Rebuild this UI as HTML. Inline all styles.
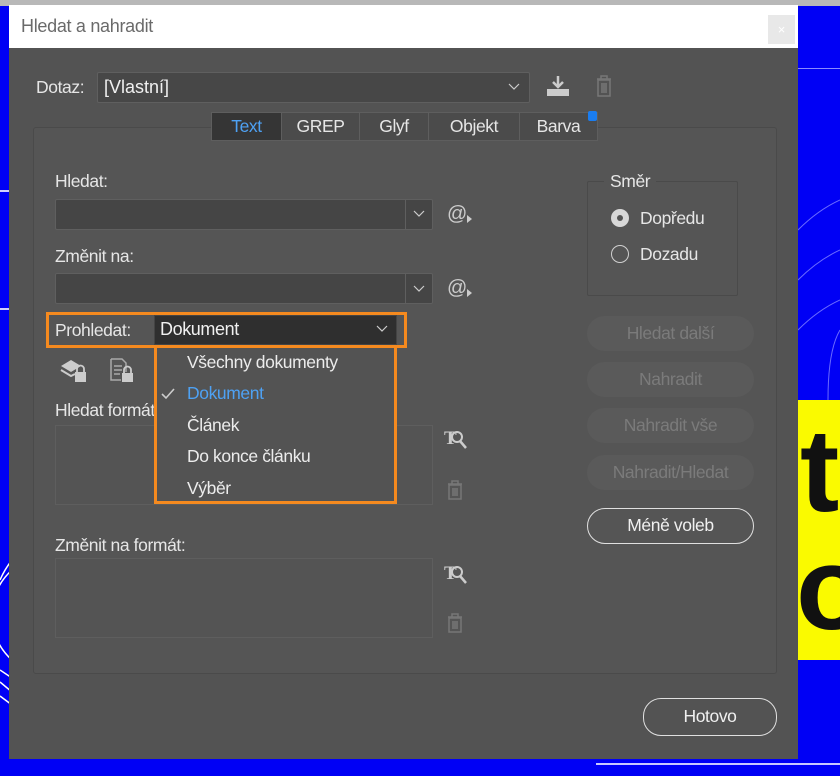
<!DOCTYPE html>
<html><head><meta charset="utf-8"><style>
*{margin:0;padding:0;box-sizing:border-box}
body{width:840px;height:776px;overflow:hidden;background:#0000f5;font-family:"Liberation Sans",sans-serif;position:relative;color:#e8e8e8}
.a{position:absolute}
.lbl{font-size:17.5px;color:#e6e6e6;letter-spacing:-0.4px}
.field{background:#454545;border:1px solid #5f5f5f;border-radius:2px}
.btn{position:absolute;left:587px;width:167px;height:35px;border-radius:18px;background:#5a5a5a;color:#7b7b7b;font-size:17.5px;text-align:center;line-height:35px;letter-spacing:-0.4px}
.obtn{position:absolute;border:1.5px solid #e0e0e0;border-radius:18px;color:#f0f0f0;font-size:17.5px;text-align:center;letter-spacing:-0.4px}
.tab{position:absolute;top:112px;height:29px;background:#4b4b4b;border:1px solid #5e5e5e;font-size:17.5px;line-height:27px;text-align:center;color:#e6e6e6;letter-spacing:-0.4px}
.mi{position:absolute;left:187px;font-size:17.5px;color:#ececec;letter-spacing:-0.4px}
</style></head><body>
<div class="a" style="left:0;top:0;width:840px;height:6px;background:#b8b8b8"></div>
<div class="a" style="left:798px;top:68px;width:42px;height:1px;background:#8a8aff"></div>
<div class="a" style="left:0;top:190px;width:10px;height:2px;background:#d0d0ff"></div>
<div class="a" style="left:0;top:308px;width:10px;height:2px;background:#d0d0ff"></div>
<svg class="a" style="left:0;top:560px" width="12" height="160"><g fill="none" stroke="#fff" stroke-width="1.5"><path d="M12 10 A60 60 0 0 0 12 100"/><path d="M12 0 A90 90 0 0 0 0 20"/><path d="M0 110 L12 118"/><path d="M0 122 L12 132"/><path d="M0 136 L12 145"/></g></svg>
<div class="a" style="left:798px;top:400px;width:42px;height:260px;background:#fafa00"></div>
<div class="a" style="left:800px;top:412px;font:bold 118px/1 'Liberation Sans',sans-serif;color:#111;letter-spacing:-4px">t</div>
<div class="a" style="left:796px;top:530px;font:bold 118px/1 'Liberation Sans',sans-serif;color:#111">o</div>
<svg class="a" style="left:798px;top:130px" width="42" height="300"><g fill="none" stroke="#6a6aff" stroke-width="1"><path d="M0 100 Q20 80 42 70"/><path d="M0 150 Q20 130 42 120"/><path d="M0 200 Q20 180 42 170"/><path d="M30 270 Q30 220 42 200"/></g></svg>
<div class="a" style="left:596px;top:763px;width:244px;height:2px;background:#c8c8ff"></div>

<div class="a" style="left:9px;top:5px;width:789px;height:754px;background:#535353"></div>
<div class="a" style="left:9px;top:5px;width:789px;height:43px;background:#fff"></div>
<div class="a" style="left:21px;top:16px;font-size:18px;color:#6a6a6a;letter-spacing:-0.3px">Hledat a nahradit</div>
<div class="a" style="left:768px;top:15px;width:27px;height:29px;background:#e8e8e8;color:#fff;font-size:13px;text-align:center;line-height:29px">×</div>

<div class="a lbl" style="left:36px;top:77px">Dotaz:</div>
<div class="a field" style="left:97px;top:72px;width:433px;height:31px;background:#474747"></div>
<div class="a" style="left:104px;top:77px;font-size:18px;color:#f0f0f0">[Vlastní]</div>
<svg class="a" style="left:508px;top:83px" width="12" height="8"><path d="M1 1 L6 6 L11 1" fill="none" stroke="#ccc" stroke-width="1.2"/></svg>
<svg class="a" style="left:544px;top:74px" width="28" height="24"><path d="M14 2 V12 M9 8 L14 13 L19 8" stroke="#ccc" stroke-width="2.5" fill="none"/><rect x="3" y="15" width="22" height="7" fill="#ccc"/></svg>
<svg class="a" style="left:594px;top:74px" width="20" height="24"><g fill="none" stroke="#777" stroke-width="1.5"><path d="M3 5 H17 M7 5 V2 H13 V5"/><rect x="4" y="6" width="12" height="16"/><path d="M8 9 V19 M10 9 V19 M12 9 V19"/></g></svg>

<div class="a" style="left:33px;top:127px;width:744px;height:547px;border:1px solid #4a4a4a;border-radius:3px;background:#555"></div>
<div class="tab" style="left:211px;width:71px;background:#353535;color:#4ea1f3">Text</div>
<div class="tab" style="left:281px;width:79px">GREP</div>
<div class="tab" style="left:359px;width:70px">Glyf</div>
<div class="tab" style="left:428px;width:92px">Objekt</div>
<div class="tab" style="left:519px;width:79px">Barva</div>
<div class="a" style="left:588px;top:111px;width:9px;height:10px;background:#1a7df0;border-radius:2px"></div>

<div class="a lbl" style="left:55px;top:171px">Hledat:</div>
<div class="a field" style="left:55px;top:199px;width:378px;height:31px"></div>
<div class="a" style="left:405px;top:200px;width:1px;height:29px;background:#5f5f5f"></div>
<svg class="a" style="left:413px;top:210px" width="12" height="8"><path d="M1 1 L6 6 L11 1" fill="none" stroke="#ccc" stroke-width="1.2"/></svg>
<div class="a" style="left:447px;top:203px;font-size:20px;color:#ccc">@</div>
<svg class="a" style="left:467px;top:215px" width="6" height="8"><path d="M0 0 L5 4 L0 8Z" fill="#ccc"/></svg>

<div class="a lbl" style="left:55px;top:246px">Změnit na:</div>
<div class="a field" style="left:55px;top:273px;width:378px;height:31px"></div>
<div class="a" style="left:405px;top:274px;width:1px;height:29px;background:#5f5f5f"></div>
<svg class="a" style="left:413px;top:285px" width="12" height="8"><path d="M1 1 L6 6 L11 1" fill="none" stroke="#ccc" stroke-width="1.2"/></svg>
<div class="a" style="left:447px;top:277px;font-size:20px;color:#ccc">@</div>
<svg class="a" style="left:467px;top:289px" width="6" height="8"><path d="M0 0 L5 4 L0 8Z" fill="#ccc"/></svg>

<div class="a" style="left:46px;top:312px;width:361px;height:36px;border:3px solid #f58a1f"></div>
<div class="a lbl" style="left:55px;top:320px">Prohledat:</div>
<div class="a" style="left:154px;top:315px;width:243px;height:30px;background:#2f2f2f;border:1px solid #444"></div>
<div class="a" style="left:160px;top:319px;font-size:18px;color:#f0f0f0;letter-spacing:-0.4px">Dokument</div>
<svg class="a" style="left:376px;top:325px" width="12" height="8"><path d="M1 1 L6 6 L11 1" fill="none" stroke="#ccc" stroke-width="1.2"/></svg>

<svg class="a" style="left:59px;top:356px" width="30" height="28"><path d="M2 10 L12 4 L22 10 L12 16Z" fill="#ccc"/><path d="M2 14 L12 20 L16 18" stroke="#ccc" stroke-width="2" fill="none"/><rect x="16" y="16" width="11" height="10" fill="#ccc"/><path d="M18 16 V13 A3.5 3.5 0 0 1 25 13 V16" stroke="#ccc" stroke-width="1.8" fill="none"/></svg>
<svg class="a" style="left:108px;top:356px" width="28" height="28"><path d="M3 3 H14 L18 7 V16" stroke="#aaa" stroke-width="1.5" fill="none"/><path d="M3 3 V24 H13" stroke="#aaa" stroke-width="1.5" fill="none"/><path d="M6 10 H14 M6 14 H14 M6 18 H12" stroke="#aaa" stroke-width="1.5"/><rect x="14" y="17" width="11" height="9" fill="#ccc"/><path d="M16 17 V14 A3.5 3.5 0 0 1 23 14 V17" stroke="#ccc" stroke-width="1.8" fill="none"/></svg>

<div class="a lbl" style="left:55px;top:400px">Hledat formát:</div>
<div class="a" style="left:55px;top:425px;width:378px;height:80px;border:1px solid #5e5e5e;background:#545454"></div>
<div class="a" style="left:444px;top:428px;font:bold 19px 'Liberation Serif',serif;color:#ccc">T</div>
<svg class="a" style="left:450px;top:430px" width="18" height="20"><circle cx="7" cy="7" r="5" stroke="#ccc" stroke-width="2" fill="none"/><path d="M10 11 L16 18" stroke="#ccc" stroke-width="2.5"/></svg>
<svg class="a" style="left:446px;top:480px" width="18" height="20"><g fill="none" stroke="#777" stroke-width="1.5"><path d="M2 4 H16 M6 4 V1 H12 V4"/><rect x="3" y="5" width="12" height="14"/><path d="M7 8 V16 M9 8 V16 M11 8 V16"/></g></svg>

<div class="a lbl" style="left:55px;top:535px">Změnit na formát:</div>
<div class="a" style="left:55px;top:558px;width:378px;height:80px;border:1px solid #5e5e5e;background:#545454"></div>
<div class="a" style="left:444px;top:563px;font:bold 19px 'Liberation Serif',serif;color:#ccc">T</div>
<svg class="a" style="left:450px;top:565px" width="18" height="20"><circle cx="7" cy="7" r="5" stroke="#ccc" stroke-width="2" fill="none"/><path d="M10 11 L16 18" stroke="#ccc" stroke-width="2.5"/></svg>
<svg class="a" style="left:446px;top:613px" width="18" height="20"><g fill="none" stroke="#777" stroke-width="1.5"><path d="M2 4 H16 M6 4 V1 H12 V4"/><rect x="3" y="5" width="12" height="14"/><path d="M7 8 V16 M9 8 V16 M11 8 V16"/></g></svg>

<div class="a" style="left:154px;top:345px;width:243px;height:159px;background:#535353;border:3px solid #f58a1f"></div>
<div class="mi" style="top:352px">Všechny dokumenty</div>
<svg class="a" style="left:160px;top:387px" width="16" height="14"><path d="M2 7 L6 11 L14 2" fill="none" stroke="#ccc" stroke-width="1.6"/></svg>
<div class="mi" style="top:383px;color:#4ea1f3">Dokument</div>
<div class="mi" style="top:415px">Článek</div>
<div class="mi" style="top:446px">Do konce článku</div>
<div class="mi" style="top:478px">Výběr</div>

<div class="a" style="left:587px;top:181px;width:151px;height:115px;border:1px solid #4a4a4a;border-radius:2px"></div>
<div class="a lbl" style="left:604px;top:171px;background:#555;padding:0 6px">Směr</div>
<div class="a" style="left:611px;top:209px;width:18px;height:18px;border-radius:50%;background:#d8d8d8"></div>
<div class="a" style="left:617px;top:215px;width:6px;height:6px;border-radius:50%;background:#555"></div>
<div class="a lbl" style="left:640px;top:208px">Dopředu</div>
<div class="a" style="left:611px;top:245px;width:18px;height:18px;border-radius:50%;border:1.5px solid #d0d0d0"></div>
<div class="a lbl" style="left:640px;top:244px">Dozadu</div>

<div class="btn" style="top:316px">Hledat další</div>
<div class="btn" style="top:362px">Nahradit</div>
<div class="btn" style="top:408px">Nahradit vše</div>
<div class="btn" style="top:455px">Nahradit/Hledat</div>
<div class="obtn" style="left:587px;top:508px;width:167px;height:36px;line-height:33px">Méně voleb</div>
<div class="obtn" style="left:643px;top:698px;width:134px;height:38px;line-height:35px">Hotovo</div>
</body></html>
